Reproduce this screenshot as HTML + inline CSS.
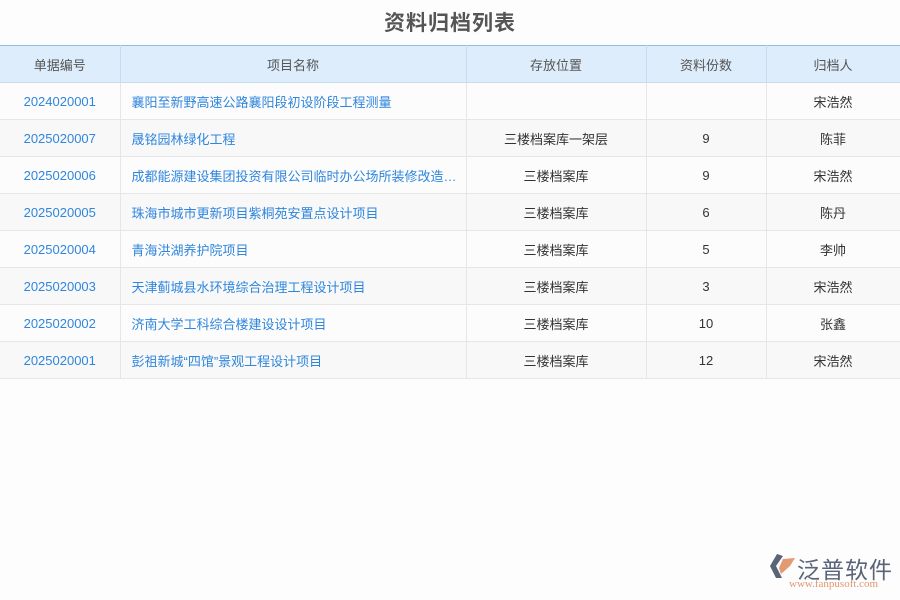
<!DOCTYPE html>
<html><head><meta charset="utf-8"><style>
*{margin:0;padding:0;box-sizing:border-box}
body{width:900px;height:600px;background:#fdfdfe;font-family:"Liberation Sans","Noto Sans CJK SC",sans-serif;position:relative;overflow:hidden}
h1{position:absolute;top:7px;left:0;width:900px;text-align:center;font-size:21px;font-weight:bold;color:#555;letter-spacing:1px}
table{position:absolute;top:45px;left:0;width:900px;border-collapse:collapse;table-layout:fixed;font-size:13px}
th{height:37px;background:#ddedfb;color:#555;font-weight:normal;border-top:1px solid #8fbde6;border-right:1px solid #c9dcee;border-bottom:1px solid #c9dcee}
td{height:37px;border:1px solid #e6e6e6;border-left:none;text-align:center;color:#333;white-space:nowrap;overflow:hidden;text-overflow:ellipsis}
td:nth-child(1){color:#2f86dc;border-right:1px solid #e6e6e6}
td:nth-child(2){color:#2f86dc;text-align:left;padding-left:11px}
tr:nth-child(even) td{background:#fcfcfd}
tr:nth-child(odd) td{background:#f8f8f9}
.logo{position:absolute;left:768px;top:551px}
.logo .cn{position:absolute;left:29px;top:0;font-size:23px;color:#5a6478;letter-spacing:1px;white-space:nowrap}
.logo .url{position:absolute;left:21px;top:27px;font-size:11px;color:#e29670;font-family:"Liberation Serif",serif;white-space:nowrap}
</style></head><body>
<h1>资料归档列表</h1>
<table>
<colgroup><col style="width:120px"><col style="width:346px"><col style="width:180px"><col style="width:120px"><col style="width:134px"></colgroup>
<tr><th>单据编号</th><th>项目名称</th><th>存放位置</th><th>资料份数</th><th>归档人</th></tr>
<tr><td>2024020001</td><td>襄阳至新野高速公路襄阳段初设阶段工程测量</td><td></td><td></td><td>宋浩然</td></tr>
<tr><td>2025020007</td><td>晟铭园林绿化工程</td><td>三楼档案库一架层</td><td>9</td><td>陈菲</td></tr>
<tr><td>2025020006</td><td>成都能源建设集团投资有限公司临时办公场所装修改造工程</td><td>三楼档案库</td><td>9</td><td>宋浩然</td></tr>
<tr><td>2025020005</td><td>珠海市城市更新项目紫桐苑安置点设计项目</td><td>三楼档案库</td><td>6</td><td>陈丹</td></tr>
<tr><td>2025020004</td><td>青海洪湖养护院项目</td><td>三楼档案库</td><td>5</td><td>李帅</td></tr>
<tr><td>2025020003</td><td>天津蓟城县水环境综合治理工程设计项目</td><td>三楼档案库</td><td>3</td><td>宋浩然</td></tr>
<tr><td>2025020002</td><td>济南大学工科综合楼建设设计项目</td><td>三楼档案库</td><td>10</td><td>张鑫</td></tr>
<tr><td>2025020001</td><td>彭祖新城“四馆”景观工程设计项目</td><td>三楼档案库</td><td>12</td><td>宋浩然</td></tr>
</table>
<div class="logo">
<svg width="28" height="26" viewBox="0 0 28 26" style="position:absolute;left:0;top:2px"><path d="M9 1 L2 13 L8 25 L14 25 L8 13 L15 3Z" fill="#5a6478"/><path d="M15 6 L27 5 L22 13 L13 21 L11 15Z" fill="#e39a70"/></svg>
<div class="cn">泛普软件</div>
<div class="url">www.fanpusoft.com</div>
</div>
</body></html>
